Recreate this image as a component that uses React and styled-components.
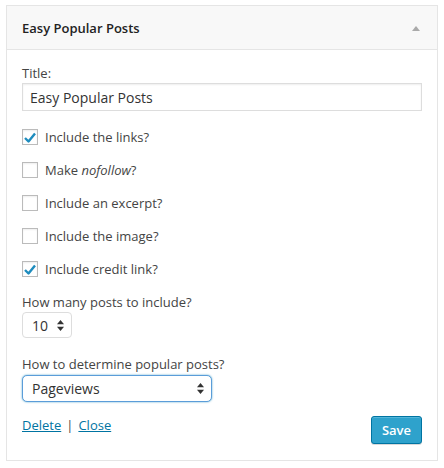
import React from "react";
import styled, { createGlobalStyle } from "styled-components";

const Global = createGlobalStyle`
  html, body { margin: 0; padding: 0; background: #fff; }
  body { font-family: "Open Sans", "Liberation Sans", sans-serif; color: #444; font-size: 13px; }
  * { box-sizing: border-box; }
`;

const Page = styled.div`
  padding: 5px 0 0 6px;
`;

const Widget = styled.div`
  width: 432px;
  height: 456px;
  border: 1px solid #e5e5e5;
  background: #fff;
  display: flex;
  flex-direction: column;
`;

const Header = styled.div`
  height: 44px;
  background: #f8f8f8;
  border-bottom: 1px solid #e5e5e5;
  display: flex;
  align-items: center;
  justify-content: space-between;
  padding: 0 17px 0 15px;
`;

const HeaderTitle = styled.h3`
  margin: 0;
  font-size: 13px;
  font-weight: 600;
  color: #222;
`;

const Arrow = styled.span`
  width: 0;
  height: 0;
  border-left: 4px solid transparent;
  border-right: 4px solid transparent;
  border-bottom: 5px solid #aaa;
  margin-top: 1px;
`;

const Body = styled.div`
  padding: 14px 15px 0 15px;
  flex: 1;
  display: flex;
  flex-direction: column;
`;

const Label = styled.label`
  display: block;
  font-size: 13px;
  line-height: 18px;
`;

const TextInput = styled.input`
  display: block;
  width: 100%;
  height: 28px;
  margin-top: 1px;
  padding: 0 7px;
  border: 1px solid #ddd;
  box-shadow: inset 0 1px 2px rgba(0,0,0,0.07);
  font-family: "Open Sans", "Liberation Sans", sans-serif;
  font-size: 14px;
  color: #333;
  outline: none;
`;

const CheckList = styled.div`
  display: flex;
  flex-direction: column;
  gap: 17px;
  margin-top: 18px;
`;

const CheckRow = styled.div`
  display: flex;
  align-items: center;
  gap: 7px;
  height: 16px;
  font-size: 13px;
`;

const Box = styled.span`
  width: 16px;
  height: 16px;
  border: 1px solid #bbb;
  background: #fff;
  box-shadow: inset 0 1px 2px rgba(0,0,0,0.07);
  display: flex;
  align-items: center;
  justify-content: center;
  flex: none;
`;

const Field = styled.div`
  margin-top: ${(p) => p.$mt}px;
`;

const Select = styled.div`
  margin-top: ${(p) => p.$mt}px;
  width: ${(p) => p.$w}px;
  height: ${(p) => p.$h}px;
  border: 1px solid ${(p) => (p.$focus ? "#5b9dd9" : "#ddd")};
  border-radius: ${(p) => (p.$focus ? 5 : 4)}px;
  box-shadow: ${(p) => (p.$focus ? "0 0 2px rgba(30,140,190,0.8)" : "none")};
  background: #fff;
  display: flex;
  align-items: center;
  justify-content: space-between;
  padding: 0 7px 0 ${(p) => p.$pl}px;
  font-size: ${(p) => p.$fs}px;
  color: #333;
`;

const Footer = styled.div`
  display: flex;
  justify-content: space-between;
  align-items: flex-start;
  margin-top: 13px;
`;

const Links = styled.div`
  font-size: 13px;
  margin-top: 1px;
  color: #444;
`;

const Link = styled.a`
  color: #0074a2;
  text-decoration: underline;
`;

const Sep = styled.span`
  margin: 0 5px;
`;

const Button = styled.button`
  height: 28px;
  padding: 0 10px;
  background: #2ea2cc;
  border: 1px solid #0074a2;
  border-radius: 3px;
  box-shadow: inset 0 1px 0 rgba(120,200,230,0.5), 0 1px 0 rgba(0,0,0,0.15);
  color: #fff;
  font-family: "Open Sans", "Liberation Sans", sans-serif;
  font-size: 13px;
  font-weight: 600;
  margin-top: 1px;
`;

const Check = () => (
  <svg width="12" height="11" viewBox="0 0 12 11">
    <path d="M1 6 L4.5 9.5 L11 1.5" fill="none" stroke="#1e8cbe" strokeWidth="2.4" strokeLinejoin="round" />
  </svg>
);

const Spinner = () => (
  <svg width="7" height="11" viewBox="0 0 7 11">
    <path d="M3.5 0 L7 4.2 L0 4.2 Z" fill="#333" />
    <path d="M3.5 11 L7 6.8 L0 6.8 Z" fill="#333" />
  </svg>
);

const items = [
  { label: <>Include the links?</>, checked: true },
  { label: <>Make <em>nofollow</em>?</>, checked: false },
  { label: <>Include an excerpt?</>, checked: false },
  { label: <>Include the image?</>, checked: false },
  { label: <>Include credit link?</>, checked: true },
];

export default function App() {
  return (
    <Page>
      <Global />
      <Widget>
        <Header>
          <HeaderTitle>Easy Popular Posts</HeaderTitle>
          <Arrow />
        </Header>
        <Body>
          <Label>Title:</Label>
          <TextInput defaultValue="Easy Popular Posts" />
          <CheckList>
            {items.map((it, i) => (
              <CheckRow key={i}>
                <Box>{it.checked && <Check />}</Box>
                <span>{it.label}</span>
              </CheckRow>
            ))}
          </CheckList>
          <Field $mt={16}>
            <Label>How many posts to include?</Label>
            <Select $mt={1} $w={50} $h={26} $pl={9} $fs={14}>
              <span>10</span>
              <Spinner />
            </Select>
          </Field>
          <Field $mt={17}>
            <Label>How to determine popular posts?</Label>
            <Select $mt={2} $w={190} $h={27} $pl={9} $fs={14} $focus>
              <span>Pageviews</span>
              <Spinner />
            </Select>
          </Field>
          <Footer>
            <Links>
              <Link href="#">Delete</Link>
              <Sep>|</Sep>
              <Link href="#">Close</Link>
            </Links>
            <Button>Save</Button>
          </Footer>
        </Body>
      </Widget>
    </Page>
  );
}
